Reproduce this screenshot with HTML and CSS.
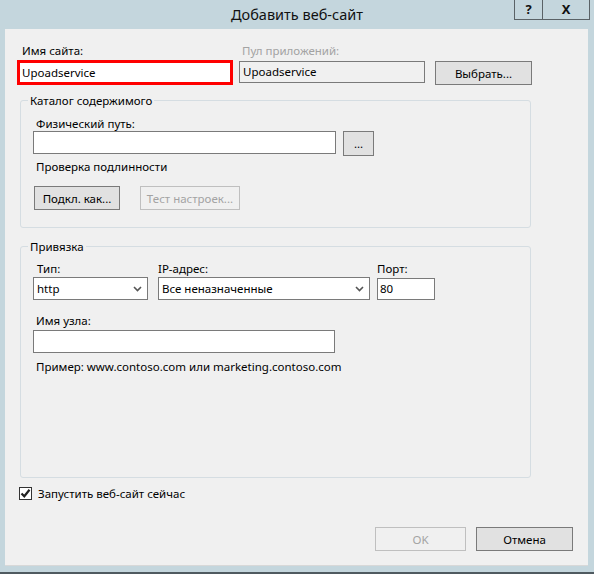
FILE: index.html
```html
<!DOCTYPE html>
<html lang="ru">
<head>
  <meta charset="UTF-8">
  <title>Добавить веб-сайт</title>
  <link rel="stylesheet" href="styles.css">
</head>
<body>

<div class="window">
  <div class="titlebar">
    <div class="title">Добавить веб-сайт</div>
    <div class="caption-btns">
      <span class="cap-btn help">?</span>
      <span class="cap-btn close">X</span>
    </div>
  </div>

  <div class="client">
    <div class="site-row">
      <div class="col col-name">
        <label class="lbl">Имя сайта:</label>
        <div class="field field-red">Upoadservice</div>
      </div>
      <div class="col col-pool">
        <label class="lbl lbl-disabled">Пул приложений:</label>
        <div class="field field-readonly">Upoadservice</div>
      </div>
      <button class="btn btn-select">Выбрать...</button>
    </div>

    <fieldset class="group group-content">
      <legend>Каталог содержимого</legend>
      <label class="lbl lbl-in">Физический путь:</label>
      <div class="path-row">
        <div class="field field-path"></div>
        <button class="btn btn-dots">...</button>
      </div>
      <div class="lbl lbl-in auth">Проверка подлинности</div>
      <div class="auth-row">
        <button class="btn btn-connect">Подкл. как...</button>
        <button class="btn btn-disabled btn-test">Тест настроек...</button>
      </div>
    </fieldset>

    <fieldset class="group group-binding">
      <legend>Привязка</legend>
      <div class="bind-row">
        <div class="col col-type">
          <label class="lbl lbl-in">Тип:</label>
          <div class="field combo">
            <span>http</span>
            <svg class="chev" width="9" height="6" viewBox="0 0 9 6"><path d="M1 1 L4.5 4.5 L8 1" fill="none" stroke="#555" stroke-width="1.6"/></svg>
          </div>
        </div>
        <div class="col col-ip">
          <label class="lbl">IP-адрес:</label>
          <div class="field combo">
            <span>Все неназначенные</span>
            <svg class="chev" width="9" height="6" viewBox="0 0 9 6"><path d="M1 1 L4.5 4.5 L8 1" fill="none" stroke="#555" stroke-width="1.6"/></svg>
          </div>
        </div>
        <div class="col col-port">
          <label class="lbl">Порт:</label>
          <div class="field field-port">80</div>
        </div>
      </div>
      <label class="lbl lbl-in host-lbl">Имя узла:</label>
      <div class="field field-host"></div>
      <div class="lbl lbl-in example">Пример: www.contoso.com или marketing.contoso.com</div>
    </fieldset>

    <div class="check-row">
      <span class="checkbox">
        <svg width="11" height="11" viewBox="0 0 11 11"><path d="M1.5 5.5 L4.3 8.3 L9.5 1.8" fill="none" stroke="#222" stroke-width="2.2"/></svg>
      </span>
      <span class="check-lbl">Запустить веб-сайт сейчас</span>
    </div>

    <div class="dialog-btns">
      <button class="btn btn-disabled btn-ok">OK</button>
      <button class="btn btn-cancel">Отмена</button>
    </div>
  </div>
</div>

</body>
</html>
```

FILE: styles.css
```css
* { margin: 0; padding: 0; box-sizing: border-box; }

body {
  font-family: 'Noto Sans', 'Open Sans', sans-serif;
  font-size: 11.5px;
  color: #000;
  background: #c4d6dd;
}

.window {
  width: 594px;
  height: 574px;
  background: #c4d6dd;
  border-bottom: 2px solid #4f5a60;
  overflow: hidden;
}

.titlebar {
  height: 29px;
  display: flex;
  position: relative;
}

.title {
  flex: 1;
  text-align: center;
  font-size: 14.5px;
  line-height: 28px;
  color: #111;
}

.caption-btns {
  position: absolute;
  top: 0;
  right: 4px;
  display: flex;
}

.cap-btn {
  height: 20px;
  border: 1px solid #5a6266;
  border-top: none;
  font-weight: bold;
  font-size: 13px;
  line-height: 18px;
  text-align: center;
  color: #111;
}

.help { width: 29px; }
.close { width: 47px; border-left: none; }

.client {
  width: 583px;
  height: 537px;
  margin-left: 5px;
  background: #f0f0f0;
  border-bottom: 1px solid #d8d8d8;
  padding-top: 14px;
}

.lbl {
  display: block;
  line-height: 15px;
  height: 15px;
  white-space: nowrap;
}

.lbl-disabled { color: #a3a3a3; }

.field {
  background: #fff;
  border: 1px solid #7a7a7a;
  line-height: 20px;
  padding-left: 3px;
  white-space: nowrap;
}

.btn {
  font-family: inherit;
  font-size: 11.5px;
  color: #000;
  background: #e1e1e1;
  border: 1px solid #7a7a7a;
  height: 24px;
}

.btn-disabled {
  background: #f0f0f0;
  border-color: #bfbfbf;
  color: #a3a3a3;
}

/* top row */
.site-row {
  display: flex;
  margin-left: 12px;
}

.col { display: flex; flex-direction: column; }

.col-name { width: 216px; }
.col-name .lbl { padding-left: 5px; }

.field-red {
  margin-top: 2px;
  height: 25px;
  border: 3px solid #f00;
  padding-left: 2px;
  line-height: 19px;
}

.col-pool { width: 186px; margin-left: 6px; }
.col-pool .lbl { padding-left: 3px; }

.field-readonly {
  margin-top: 3px;
  height: 22px;
  background: #f0f0f0;
  line-height: 20px;
}

.btn-select {
  width: 97px;
  margin-left: 10px;
  margin-top: 18px;
}

/* group boxes */
.group {
  width: 511px;
  margin-left: 15px;
  border: 1px solid #d5dde2;
  border-radius: 3px;
  padding: 0 0 0 12px;
}

.group legend {
  margin-left: -5px;
  padding: 0 2px;
  line-height: 15px;
}

.lbl-in { padding-left: 3px; }

.group-content {
  margin-top: 8px;
  height: 135px;
}

.group-content > .lbl-in:first-of-type { margin-top: 8px; }

.path-row {
  display: flex;
  align-items: flex-start;
}

.field-path { width: 303px; height: 23px; }

.btn-dots {
  width: 31px;
  height: 25px;
  margin-left: 7px;
  line-height: 14px;
}

.auth { margin-top: 3px; }

.auth-row {
  display: flex;
  margin-top: 12px;
  margin-left: 1px;
}

.btn-connect { width: 86px; }
.btn-test { width: 100px; margin-left: 20px; }

.group-binding {
  margin-top: 11px;
  height: 239px;
}

.bind-row {
  display: flex;
  margin-top: 7px;
}

.bind-row .field { margin-top: 1px; height: 23px; }

.combo {
  display: flex;
  align-items: center;
  justify-content: space-between;
  padding-right: 5px;
}

.col-type { width: 115px; }
.col-type .lbl { padding-left: 4px; }
.col-ip { width: 212px; margin-left: 10px; }
.col-port { width: 58px; margin-left: 7px; }
.bind-row .field-port { margin-top: 2px; height: 22px; padding-left: 2px; }

.host-lbl { margin-top: 13px; }

.field-host {
  width: 302px;
  height: 23px;
  margin-top: 2px;
}

.example { margin-top: 6px; }

/* footer */
.check-row {
  display: flex;
  align-items: center;
  margin: 8px 0 0 14px;
}

.checkbox {
  width: 13px;
  height: 13px;
  border: 1px solid #333;
  background: #fff;
  display: flex;
  align-items: center;
  justify-content: center;
}

.check-lbl { margin-left: 6px; line-height: 15px; }

.dialog-btns {
  display: flex;
  justify-content: flex-end;
  margin: 26px 15px 0 0;
}

.btn-ok { width: 91px; }
.btn-cancel { width: 97px; margin-left: 10px; }
```
